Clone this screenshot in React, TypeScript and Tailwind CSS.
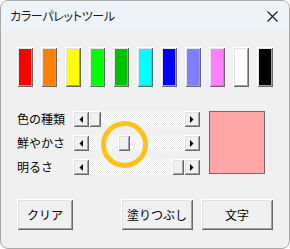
const swatches = [
  "#ff0000",
  "#ff8000",
  "#ffff00",
  "#00ff00",
  "#00c000",
  "#00ffff",
  "#0000ff",
  "#8080ff",
  "#ff80ff",
  "#ffffff",
  "#000000",
];

const bevel =
  "shadow-[inset_1px_1px_0_#ffffff,inset_-1px_-1px_0_#696969,inset_2px_2px_0_#e3e3e3,inset_-2px_-2px_0_#a0a0a0]";

const font = { fontFamily: '"Noto Sans CJK JP", "Noto Sans", sans-serif' };

const Arrow = ({ dir }: { dir: "left" | "right" }) => (
  <div className={`w-4 h-4 bg-[#f0f0f0] flex items-center justify-center ${bevel}`}>
    <svg width="4" height="7" viewBox="0 0 4 7">
      {dir === "left" ? (
        <polygon points="4,0 4,7 0.5,3.5" fill="#000" />
      ) : (
        <polygon points="0,0 0,7 3.5,3.5" fill="#000" />
      )}
    </svg>
  </div>
);

// thumb position is data: 0 = far left, 1 = far right
const ScrollBar = ({ pos }: { pos: number }) => (
  <div className="flex w-[127px] h-4">
    <Arrow dir="left" />
    <div className="relative flex-1 bg-[repeating-conic-gradient(#ffffff_0_25%,#ebebeb_0_50%)] bg-[length:2px_2px]">
      <div
        className={`absolute top-0 w-[12px] h-4 bg-[#f0f0f0] ${bevel}`}
        style={{ left: `${Math.round(pos * 83)}px` }}
      />
    </div>
    <Arrow dir="right" />
  </div>
);

const Button = ({ label, w }: { label: string; w: string }) => (
  <button
    className={`${w} h-[31px] bg-[#f0f0f0] text-[12px] text-black ${bevel}`}
    style={font}
  >
    {label}
  </button>
);

export default function App() {
  const rows = [
    { label: "色の種類", pos: 0 },
    { label: "鮮やかさ", pos: 0.35 },
    { label: "明るさ", pos: 1 },
  ];

  return (
    <div className="w-[290px] h-[249px] bg-white">
      <div className="relative w-[290px] h-[249px] rounded-[8px] border border-[#a8a8a8] overflow-hidden flex flex-col bg-[#f0f0f0]">
        <div className="h-[30px] bg-[#eef3f7] flex items-center justify-between pl-[9px] pr-[11px]">
          <span className="text-[12px] text-[#1a1a1a] [font-feature-settings:'palt'] tracking-[-0.3px]" style={font}>
            カラーパレットツール
          </span>
          <svg width="11" height="11" viewBox="0 0 11 11">
            <path d="M0.5 0.5 L10.5 10.5 M10.5 0.5 L0.5 10.5" stroke="#1a1a1a" strokeWidth="1.1" />
          </svg>
        </div>

        <div className="flex-1 pl-4 pt-4">
          <div className="flex gap-2">
            {swatches.map((c) => (
              <div key={c} className={`w-4 h-10 p-[2px] bg-[#f0f0f0] ${bevel}`}>
                <div className="w-full h-full" style={{ backgroundColor: c }} />
              </div>
            ))}
          </div>

          <div className="flex mt-6">
            <div className="flex flex-col gap-2">
              {rows.map((r) => (
                <div key={r.label} className="flex items-center h-4">
                  <span className="w-[56px] text-[12px] text-black leading-none" style={font}>
                    {r.label}
                  </span>
                  <ScrollBar pos={r.pos} />
                </div>
              ))}
            </div>
            <div className="ml-[9px] w-[56px] h-[63px] bg-[#ffa6a6] border border-[#6a6a6a]" />
          </div>

          <div className="flex mt-6">
            <Button label="クリア" w="w-[56px]" />
            <div className="ml-12 flex gap-2">
              <Button label="塗りつぶし" w="w-[72px]" />
              <Button label="文字" w="w-[72px]" />
            </div>
          </div>
        </div>

        <div className="absolute left-[100px] top-[120px] w-[47px] h-[47px] rounded-full border-[5px] border-[#fcc21b]" />
      </div>
    </div>
  );
}
